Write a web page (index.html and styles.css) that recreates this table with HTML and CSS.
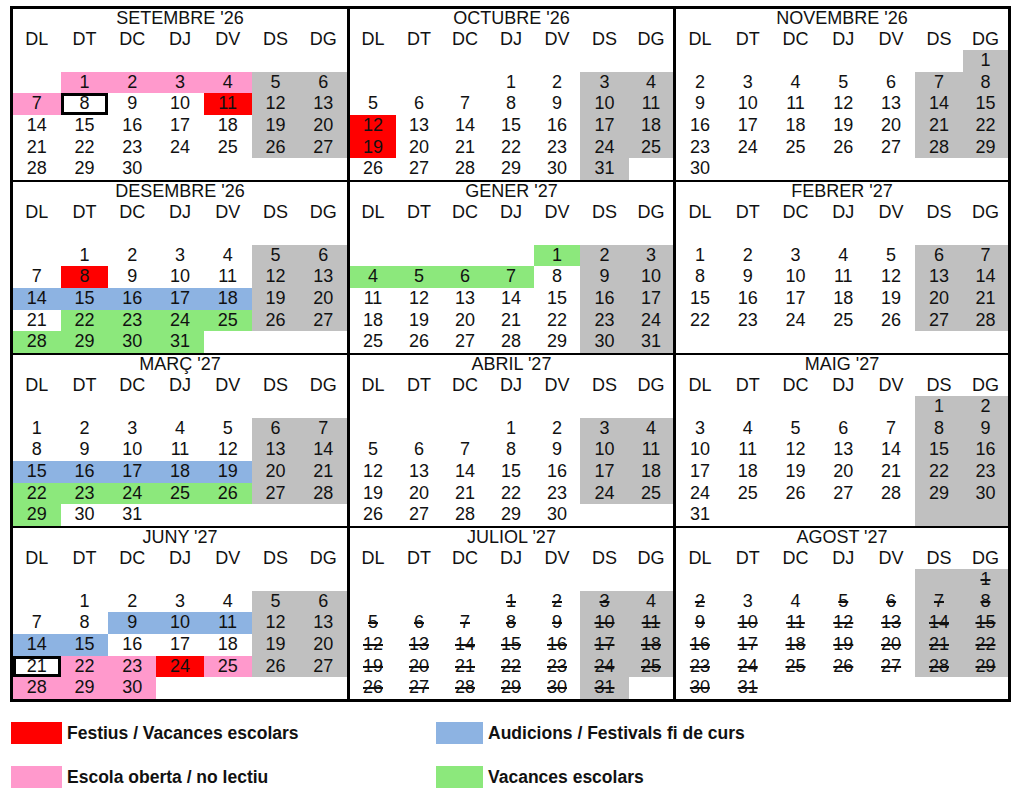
FILE: index.html
```html
<!DOCTYPE html>
<html lang="ca">
<head>
<meta charset="utf-8">
<title>Calendari escolar 2026-2027</title>
<link rel="stylesheet" href="styles.css">
</head>
<body>
<div class="cal">

  <div class="month c1">
    <div class="title">SETEMBRE '26</div>
    <span>DL</span><span>DT</span><span>DC</span><span>DJ</span><span>DV</span><span>DS</span><span>DG</span>
    <span></span><span></span><span></span><span></span><span></span><span></span><span></span>
    <span></span><span class="p">1</span><span class="p">2</span><span class="p">3</span><span class="p">4</span><span class="g">5</span><span class="g">6</span>
    <span class="p">7</span><span class="box">8</span><span>9</span><span>10</span><span class="r">11</span><span class="g">12</span><span class="g">13</span>
    <span>14</span><span>15</span><span>16</span><span>17</span><span>18</span><span class="g">19</span><span class="g">20</span>
    <span>21</span><span>22</span><span>23</span><span>24</span><span>25</span><span class="g">26</span><span class="g">27</span>
    <span>28</span><span>29</span><span>30</span><span></span><span></span><span></span><span></span>
  </div>

  <div class="month c2">
    <div class="title">OCTUBRE '26</div>
    <span>DL</span><span>DT</span><span>DC</span><span>DJ</span><span>DV</span><span>DS</span><span>DG</span>
    <span></span><span></span><span></span><span></span><span></span><span></span><span></span>
    <span></span><span></span><span></span><span>1</span><span>2</span><span class="g">3</span><span class="g">4</span>
    <span>5</span><span>6</span><span>7</span><span>8</span><span>9</span><span class="g">10</span><span class="g">11</span>
    <span class="r">12</span><span>13</span><span>14</span><span>15</span><span>16</span><span class="g">17</span><span class="g">18</span>
    <span class="r">19</span><span>20</span><span>21</span><span>22</span><span>23</span><span class="g">24</span><span class="g">25</span>
    <span>26</span><span>27</span><span>28</span><span>29</span><span>30</span><span class="g">31</span><span></span>
  </div>

  <div class="month c3">
    <div class="title">NOVEMBRE '26</div>
    <span>DL</span><span>DT</span><span>DC</span><span>DJ</span><span>DV</span><span>DS</span><span>DG</span>
    <span></span><span></span><span></span><span></span><span></span><span></span><span class="g">1</span>
    <span>2</span><span>3</span><span>4</span><span>5</span><span>6</span><span class="g">7</span><span class="g">8</span>
    <span>9</span><span>10</span><span>11</span><span>12</span><span>13</span><span class="g">14</span><span class="g">15</span>
    <span>16</span><span>17</span><span>18</span><span>19</span><span>20</span><span class="g">21</span><span class="g">22</span>
    <span>23</span><span>24</span><span>25</span><span>26</span><span>27</span><span class="g">28</span><span class="g">29</span>
    <span>30</span><span></span><span></span><span></span><span></span><span></span><span></span>
  </div>

  <div class="month c1">
    <div class="title">DESEMBRE '26</div>
    <span>DL</span><span>DT</span><span>DC</span><span>DJ</span><span>DV</span><span>DS</span><span>DG</span>
    <span></span><span></span><span></span><span></span><span></span><span></span><span></span>
    <span></span><span>1</span><span>2</span><span>3</span><span>4</span><span class="g">5</span><span class="g">6</span>
    <span>7</span><span class="r">8</span><span>9</span><span>10</span><span>11</span><span class="g">12</span><span class="g">13</span>
    <span class="b">14</span><span class="b">15</span><span class="b">16</span><span class="b">17</span><span class="b">18</span><span class="g">19</span><span class="g">20</span>
    <span>21</span><span class="v">22</span><span class="v">23</span><span class="v">24</span><span class="v">25</span><span class="g">26</span><span class="g">27</span>
    <span class="v">28</span><span class="v">29</span><span class="v">30</span><span class="v">31</span><span></span><span></span><span></span>
  </div>

  <div class="month c2">
    <div class="title">GENER '27</div>
    <span>DL</span><span>DT</span><span>DC</span><span>DJ</span><span>DV</span><span>DS</span><span>DG</span>
    <span></span><span></span><span></span><span></span><span></span><span></span><span></span>
    <span></span><span></span><span></span><span></span><span class="v">1</span><span class="g">2</span><span class="g">3</span>
    <span class="v">4</span><span class="v">5</span><span class="v">6</span><span class="v">7</span><span>8</span><span class="g">9</span><span class="g">10</span>
    <span>11</span><span>12</span><span>13</span><span>14</span><span>15</span><span class="g">16</span><span class="g">17</span>
    <span>18</span><span>19</span><span>20</span><span>21</span><span>22</span><span class="g">23</span><span class="g">24</span>
    <span>25</span><span>26</span><span>27</span><span>28</span><span>29</span><span class="g">30</span><span class="g">31</span>
  </div>

  <div class="month c3">
    <div class="title">FEBRER '27</div>
    <span>DL</span><span>DT</span><span>DC</span><span>DJ</span><span>DV</span><span>DS</span><span>DG</span>
    <span></span><span></span><span></span><span></span><span></span><span></span><span></span>
    <span>1</span><span>2</span><span>3</span><span>4</span><span>5</span><span class="g">6</span><span class="g">7</span>
    <span>8</span><span>9</span><span>10</span><span>11</span><span>12</span><span class="g">13</span><span class="g">14</span>
    <span>15</span><span>16</span><span>17</span><span>18</span><span>19</span><span class="g">20</span><span class="g">21</span>
    <span>22</span><span>23</span><span>24</span><span>25</span><span>26</span><span class="g">27</span><span class="g">28</span>
    <span></span><span></span><span></span><span></span><span></span><span></span><span></span>
  </div>

  <div class="month c1">
    <div class="title">MARÇ '27</div>
    <span>DL</span><span>DT</span><span>DC</span><span>DJ</span><span>DV</span><span>DS</span><span>DG</span>
    <span></span><span></span><span></span><span></span><span></span><span></span><span></span>
    <span>1</span><span>2</span><span>3</span><span>4</span><span>5</span><span class="g">6</span><span class="g">7</span>
    <span>8</span><span>9</span><span>10</span><span>11</span><span>12</span><span class="g">13</span><span class="g">14</span>
    <span class="b">15</span><span class="b">16</span><span class="b">17</span><span class="b">18</span><span class="b">19</span><span class="g">20</span><span class="g">21</span>
    <span class="v">22</span><span class="v">23</span><span class="v">24</span><span class="v">25</span><span class="v">26</span><span class="g">27</span><span class="g">28</span>
    <span class="v">29</span><span>30</span><span>31</span><span></span><span></span><span></span><span></span>
  </div>

  <div class="month c2">
    <div class="title">ABRIL '27</div>
    <span>DL</span><span>DT</span><span>DC</span><span>DJ</span><span>DV</span><span>DS</span><span>DG</span>
    <span></span><span></span><span></span><span></span><span></span><span></span><span></span>
    <span></span><span></span><span></span><span>1</span><span>2</span><span class="g">3</span><span class="g">4</span>
    <span>5</span><span>6</span><span>7</span><span>8</span><span>9</span><span class="g">10</span><span class="g">11</span>
    <span>12</span><span>13</span><span>14</span><span>15</span><span>16</span><span class="g">17</span><span class="g">18</span>
    <span>19</span><span>20</span><span>21</span><span>22</span><span>23</span><span class="g">24</span><span class="g">25</span>
    <span>26</span><span>27</span><span>28</span><span>29</span><span>30</span><span></span><span></span>
  </div>

  <div class="month c3">
    <div class="title">MAIG '27</div>
    <span>DL</span><span>DT</span><span>DC</span><span>DJ</span><span>DV</span><span>DS</span><span>DG</span>
    <span></span><span></span><span></span><span></span><span></span><span class="g">1</span><span class="g">2</span>
    <span>3</span><span>4</span><span>5</span><span>6</span><span>7</span><span class="g">8</span><span class="g">9</span>
    <span>10</span><span>11</span><span>12</span><span>13</span><span>14</span><span class="g">15</span><span class="g">16</span>
    <span>17</span><span>18</span><span>19</span><span>20</span><span>21</span><span class="g">22</span><span class="g">23</span>
    <span>24</span><span>25</span><span>26</span><span>27</span><span>28</span><span class="g">29</span><span class="g">30</span>
    <span>31</span><span></span><span></span><span></span><span></span><span class="g"></span><span class="g"></span>
  </div>

  <div class="month c1">
    <div class="title">JUNY '27</div>
    <span>DL</span><span>DT</span><span>DC</span><span>DJ</span><span>DV</span><span>DS</span><span>DG</span>
    <span></span><span></span><span></span><span></span><span></span><span></span><span></span>
    <span></span><span>1</span><span>2</span><span>3</span><span>4</span><span class="g">5</span><span class="g">6</span>
    <span>7</span><span>8</span><span class="b">9</span><span class="b">10</span><span class="b">11</span><span class="g">12</span><span class="g">13</span>
    <span class="b">14</span><span class="b">15</span><span>16</span><span>17</span><span>18</span><span class="g">19</span><span class="g">20</span>
    <span class="box">21</span><span class="p">22</span><span class="p">23</span><span class="r">24</span><span class="p">25</span><span class="g">26</span><span class="g">27</span>
    <span class="p">28</span><span class="p">29</span><span class="p">30</span><span></span><span></span><span></span><span></span>
  </div>

  <div class="month c2">
    <div class="title">JULIOL '27</div>
    <span>DL</span><span>DT</span><span>DC</span><span>DJ</span><span>DV</span><span>DS</span><span>DG</span>
    <span></span><span></span><span></span><span></span><span></span><span></span><span></span>
    <span></span><span></span><span></span><span class="x">1</span><span class="x">2</span><span class="g x">3</span><span class="g">4</span>
    <span class="x">5</span><span class="x">6</span><span class="x">7</span><span class="x">8</span><span class="x">9</span><span class="g x">10</span><span class="g x">11</span>
    <span class="x">12</span><span class="x">13</span><span class="x">14</span><span class="x">15</span><span class="x">16</span><span class="g x">17</span><span class="g x">18</span>
    <span class="x">19</span><span class="x">20</span><span class="x">21</span><span class="x">22</span><span class="x">23</span><span class="g x">24</span><span class="g x">25</span>
    <span class="x">26</span><span class="x">27</span><span class="x">28</span><span class="x">29</span><span class="x">30</span><span class="g x">31</span><span></span>
  </div>

  <div class="month c3">
    <div class="title">AGOST '27</div>
    <span>DL</span><span>DT</span><span>DC</span><span>DJ</span><span>DV</span><span>DS</span><span>DG</span>
    <span></span><span></span><span></span><span></span><span></span><span class="g"></span><span class="g x">1</span>
    <span class="x">2</span><span>3</span><span>4</span><span class="x">5</span><span class="x">6</span><span class="g x">7</span><span class="g x">8</span>
    <span class="x">9</span><span class="x">10</span><span class="x">11</span><span class="x">12</span><span class="x">13</span><span class="g x">14</span><span class="g x">15</span>
    <span class="x">16</span><span class="x">17</span><span class="x">18</span><span class="x">19</span><span class="x">20</span><span class="g x">21</span><span class="g x">22</span>
    <span class="x">23</span><span class="x">24</span><span class="x">25</span><span class="x">26</span><span class="x">27</span><span class="g x">28</span><span class="g x">29</span>
    <span class="x">30</span><span class="x">31</span><span></span><span></span><span></span><span></span><span></span>
  </div>

</div>

<div class="legend">
  <div class="item"><i class="sw sw-wide r"></i>Festius / Vacances escolars</div>
  <div class="item"><i class="sw b"></i>Audicions / Festivals fi de curs</div>
  <div class="item"><i class="sw sw-wide p"></i>Escola oberta / no lectiu</div>
  <div class="item"><i class="sw v"></i>Vacances escolars</div>
</div>
</body>
</html>
```
FILE: styles.css
```css
html, body {
  margin: 0;
  padding: 0;
  background: #fff;
}

body {
  font-family: "Liberation Sans", Arial, sans-serif;
  color: #111;
}

.cal {
  margin: 6px 0 0 10px;
  width: 1001px;
  box-sizing: border-box;
  padding: 3px;
  background: #000;
  display: grid;
  grid-template-columns: 334px 323px 332px;
  column-gap: 3px;
  row-gap: 2px;
}

.month {
  background: #fff;
  display: grid;
  grid-template-columns: repeat(7, 1fr);
  grid-template-rows: 19.5px repeat(7, 21.643px);
  height: 171px;
}

.month.c2 {
  grid-template-columns: repeat(5, 1fr) 49px 44px;
}

.month.c3 {
  grid-template-columns: repeat(5, 1fr) 48px 45px;
}

.title {
  grid-column: 1 / -1;
  text-align: center;
  font-size: 18px;
  line-height: 18px;
  align-self: start;
}

.month span {
  display: block;
  text-align: center;
  font-size: 18px;
  line-height: 21.643px;
}

.g { background: #c0c0c0; }
.p { background: #ff99cc; }
.r { background: #ff0000; }
.b { background: #8db3e2; }
.v { background: #8ce87c; }

.box {
  box-shadow: inset 0 0 0 3px #000;
}

.x {
  text-decoration: line-through;
  text-decoration-thickness: 1.5px;
}

.legend {
  margin: 20px 0 0 11px;
  display: grid;
  grid-template-columns: 425px auto;
  row-gap: 22px;
}

.item {
  display: flex;
  align-items: center;
  gap: 5px;
  font-weight: bold;
  font-size: 17.5px;
  line-height: 22px;
  color: #111;
}

.sw {
  display: block;
  width: 47px;
  height: 22px;
}

.sw-wide {
  width: 51px;
}
```
